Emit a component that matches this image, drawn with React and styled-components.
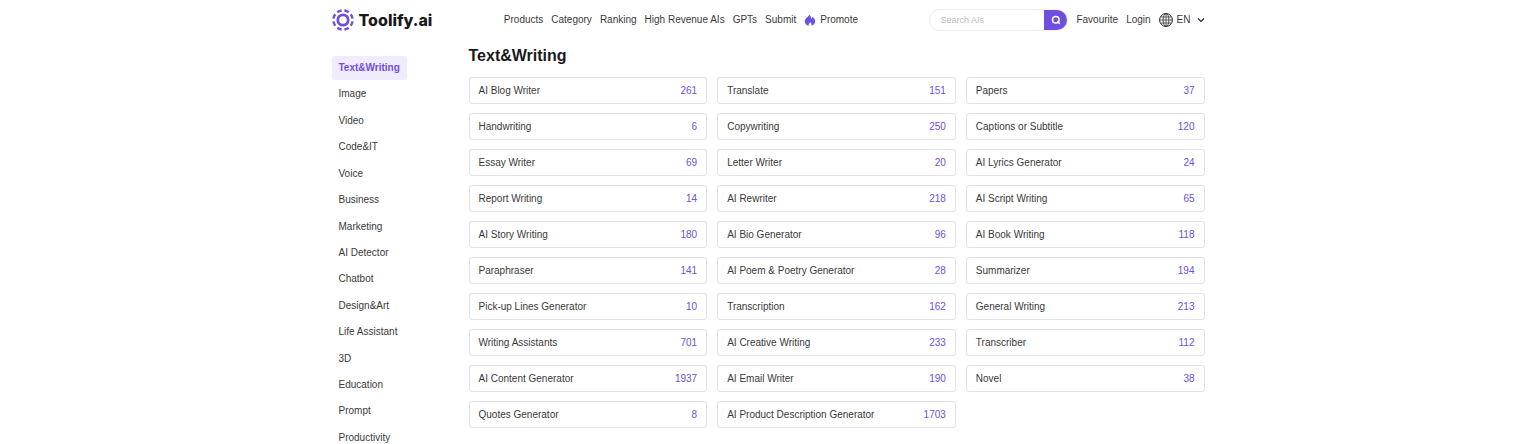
import { useState } from "react";
import { createGlobalStyle, styled } from "styled-components";

const topics = [
  "Text&Writing",
  "Image",
  "Video",
  "Code&IT",
  "Voice",
  "Business",
  "Marketing",
  "AI Detector",
  "Chatbot",
  "Design&Art",
  "Life Assistant",
  "3D",
  "Education",
  "Prompt",
  "Productivity",
];

const categories = [
  ["AI Blog Writer", 261],
  ["Translate", 151],
  ["Papers", 37],
  ["Handwriting", 6],
  ["Copywriting", 250],
  ["Captions or Subtitle", 120],
  ["Essay Writer", 69],
  ["Letter Writer", 20],
  ["AI Lyrics Generator", 24],
  ["Report Writing", 14],
  ["AI Rewriter", 218],
  ["AI Script Writing", 65],
  ["AI Story Writing", 180],
  ["AI Bio Generator", 96],
  ["AI Book Writing", 118],
  ["Paraphraser", 141],
  ["AI Poem & Poetry Generator", 28],
  ["Summarizer", 194],
  ["Pick-up Lines Generator", 10],
  ["Transcription", 162],
  ["General Writing", 213],
  ["Writing Assistants", 701],
  ["AI Creative Writing", 233],
  ["Transcriber", 112],
  ["AI Content Generator", 1937],
  ["AI Email Writer", 190],
  ["Novel", 38],
  ["Quotes Generator", 8],
  ["AI Product Description Generator", 1703],
];

const links = [
  "Products",
  "Category",
  "Ranking",
  "High Revenue AIs",
  "GPTs",
  "Submit",
];

function LogoMark() {
  return (
    <svg width="22" height="22" viewBox="0 0 22 22" fill="none" aria-hidden="true">
      <circle cx="11" cy="11" r="5.2" stroke="#6f4fe0" strokeWidth="2.8" />
      <circle
        cx="11"
        cy="11"
        r="9.6"
        stroke="#6f4fe0"
        strokeWidth="2.4"
        pathLength="80"
        strokeDasharray="6.2 3.8"
        strokeDashoffset="-1.9"
      />
    </svg>
  );
}

function FlameIcon() {
  return (
    <svg width="12" height="12" viewBox="0 0 12 12" aria-hidden="true">
      <path
        d="M5.2 0.4C6.6 1.6 7.2 3 7.1 4.8C7.8 4.4 8.3 3.6 8.4 2.7C10.2 3.9 11.2 5.5 11.2 7.3C11.2 9.6 9.4 11.4 7.2 11.7C8 10.6 7.6 9.4 6.3 8.2C5 9.3 4.4 10.5 4.8 11.7C2.4 11.2 0.8 9.6 0.8 7.5C0.8 5.9 1.5 4.8 2.6 3.8C4 2.7 5 1.8 5.2 0.4Z"
        fill="#6f4fe0"
      />
    </svg>
  );
}

function SearchIcon() {
  return (
    <svg width="10" height="10" viewBox="0 0 10 10" fill="none" aria-hidden="true">
      <circle cx="4.8" cy="4.8" r="3.3" stroke="#fff" strokeWidth="1.5" />
      <path d="M6.2 6.4L8.8 8.8" stroke="#fff" strokeWidth="1.5" />
    </svg>
  );
}

function GlobeIcon() {
  return (
    <svg width="14" height="14" viewBox="0 0 14 14" fill="none" stroke="#222" aria-hidden="true">
      <circle cx="7" cy="7" r="6.4" />
      <ellipse cx="7" cy="7" rx="2.9" ry="6.4" strokeWidth="0.8" />
      <path d="M7 0.7V13.3M0.7 7H13.3M1.6 4H12.4M1.6 10H12.4" strokeWidth="0.7" />
    </svg>
  );
}

function ChevronIcon() {
  return (
    <svg width="8" height="8" viewBox="0 0 8 8" fill="none" aria-hidden="true">
      <path d="M1 2.5L4 5.5L7 2.5" stroke="#222" strokeWidth="1.1" />
    </svg>
  );
}

export default function App() {
  const [active, setActive] = useState(topics[0]);
  const [query, setQuery] = useState("");

  const handleSubmit = (event) => {
    event.preventDefault();
  };

  return (
    <>
      <GlobalStyle />
      <Container>
        <Header>
          <Logo href="#">
            <LogoMark />
            Toolify.ai
          </Logo>
          <Nav>
            {links.map((link) => (
              <NavLink href="#" key={link}>
                {link}
              </NavLink>
            ))}
            <NavLink href="#">
              <FlameIcon />
              Promote
            </NavLink>
          </Nav>
          <Actions>
            <SearchForm onSubmit={handleSubmit}>
              <SearchInput
                type="text"
                aria-label="Search AIs"
                placeholder="Search AIs"
                value={query}
                onChange={(event) => setQuery(event.target.value)}
              />
              <SearchButton type="submit" aria-label="Search">
                <SearchIcon />
              </SearchButton>
            </SearchForm>
            <NavLink href="#">Favourite</NavLink>
            <NavLink href="#">Login</NavLink>
            <LanguageButton type="button">
              <GlobeIcon />
              <Language>EN</Language>
              <ChevronIcon />
            </LanguageButton>
          </Actions>
        </Header>
        <Content>
          <Sidebar>
            {topics.map((topic) => (
              <TopicLink
                href="#"
                key={topic}
                $active={topic === active}
                onClick={() => setActive(topic)}
              >
                {topic}
              </TopicLink>
            ))}
          </Sidebar>
          <Main>
            <Title>Text&amp;Writing</Title>
            <CardGrid>
              {categories.map(([name, count]) => (
                <Card href="#" key={name}>
                  <span>{name}</span>
                  <Count>{count}</Count>
                </Card>
              ))}
            </CardGrid>
          </Main>
        </Content>
      </Container>
    </>
  );
}

const GlobalStyle = createGlobalStyle`
  * {
    box-sizing: border-box;
  }
  body {
    margin: 0;
    background: #fff;
    color: #3a3a3a;
    font-family: "Liberation Sans", Arial, sans-serif;
    font-size: 10px;
    line-height: 12px;
  }
  a {
    color: inherit;
    text-decoration: none;
  }
  svg {
    display: block;
    flex-shrink: 0;
  }
`;

const Container = styled.div`
  max-width: 873px;
  margin: 0 auto;
`;

const Header = styled.header`
  display: flex;
  align-items: center;
  justify-content: space-between;
  height: 40px;
`;

const Logo = styled.a`
  display: flex;
  align-items: center;
  gap: 5px;
  color: #1a1a1a;
  font-family: Inter, sans-serif;
  font-size: 16px;
  font-weight: 800;
  line-height: 20px;
`;

const Nav = styled.nav`
  display: flex;
  align-items: center;
  gap: 8px;
`;

const NavLink = styled.a`
  display: flex;
  align-items: center;
  gap: 4px;
  white-space: nowrap;
`;

const Actions = styled.div`
  display: flex;
  align-items: center;
  gap: 8px;
`;

const SearchForm = styled.form`
  display: flex;
  width: 139px;
  height: 22px;
  border: 1px solid #eee;
  border-radius: 11px;
  overflow: hidden;
`;

const SearchInput = styled.input`
  flex: 1;
  min-width: 0;
  padding: 0 10px;
  border: none;
  outline: none;
  background: none;
  font-family: inherit;
  font-size: 9px;

  &::placeholder {
    color: #bbb;
  }
`;

const SearchButton = styled.button`
  display: flex;
  align-items: center;
  justify-content: center;
  width: 23px;
  padding: 0;
  border: none;
  background: #6f4fe0;
  cursor: pointer;
`;

const LanguageButton = styled.button`
  display: flex;
  align-items: center;
  gap: 4px;
  padding: 0;
  border: none;
  background: none;
  color: inherit;
  font: inherit;
  cursor: pointer;
`;

const Language = styled.span`
  margin-right: 2px;
`;

const Content = styled.div`
  display: grid;
  grid-template-columns: 137px 1fr;
`;

const Sidebar = styled.aside`
  display: flex;
  flex-direction: column;
  align-items: flex-start;
  justify-content: space-between;
  padding-top: 16px;
`;

const TopicLink = styled.a`
  padding: 6px 7px;
  border-radius: 3px;
  background: ${({ $active }) => ($active ? "#f0ebfd" : "none")};
  color: ${({ $active }) => ($active ? "#6f4fe0" : "inherit")};
  font-weight: ${({ $active }) => ($active ? 700 : 400)};
`;

const Main = styled.main`
  padding: 6px 0 22px;
`;

const Title = styled.h1`
  margin: 0 0 11px;
  color: #1a1a1a;
  font-size: 16px;
  line-height: 20px;
`;

const CardGrid = styled.div`
  display: grid;
  grid-template-columns: repeat(3, 1fr);
  gap: 9px 10px;
`;

const Card = styled.a`
  display: flex;
  align-items: center;
  justify-content: space-between;
  height: 27px;
  padding: 0 9px;
  border: 1px solid #e3e1ea;
  border-radius: 3px;
`;

const Count = styled.span`
  color: #6f4fe0;
`;
